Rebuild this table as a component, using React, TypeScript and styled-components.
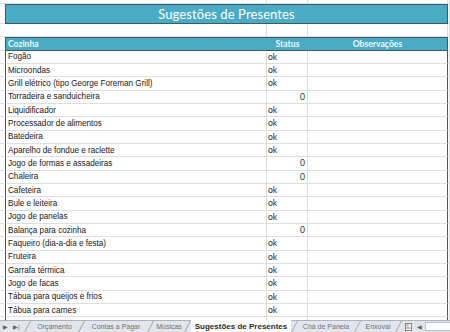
import React from 'react';
import styled, { createGlobalStyle } from 'styled-components';

const GlobalStyle = createGlobalStyle`
  html, body { margin: 0; padding: 0; width: 450px; height: 332px; overflow: hidden; background: #ffffff; }
  #root { width: 450px; height: 332px; }
`;

const ROW = 'calc(40px / 3)';
const GRID = '#dcdedf';
const EDGE = '#3b5b66';
const TEAL = '#4aabc5';
const COLS = '5px 262px 41px 140px 1fr';

const Window = styled.div`
  display: flex;
  flex-direction: column;
  width: 450px;
  height: 332px;
  overflow: hidden;
  font-family: "Liberation Sans", Arial, sans-serif;
`;

const Sheet = styled.div`
  flex: 1;
  min-height: 0;
  overflow: hidden;
  display: flex;
  flex-direction: column;
`;

const Row = styled.div<{ $h?: string }>`
  display: grid;
  grid-template-columns: ${COLS};
  height: ${(p) => p.$h ?? ROW};
  flex-shrink: 0;
`;

const Cell = styled.div<{ $edgeL?: boolean; $edgeR?: boolean }>`
  box-sizing: border-box;
  border-right: 1px solid ${(p) => (p.$edgeR ? EDGE : GRID)};
  border-bottom: 1px solid ${GRID};
  ${(p) => (p.$edgeL ? `border-left: 1px solid ${EDGE};` : '')}
  overflow: hidden;
  white-space: nowrap;
`;

const Margin = styled(Cell)`
  border-right: none;
`;

const Title = styled.div`
  grid-column: 2 / 5;
  box-sizing: border-box;
  border: 1px solid ${EDGE};
  background: ${TEAL};
  color: #ffffff;
  font-family: Lato, "Open Sans", sans-serif;
  font-size: 13px;
  display: flex;
  align-items: center;
  justify-content: center;
  letter-spacing: 0.1px;
`;

const HeadCell = styled.div<{ $align?: string; $edgeL?: boolean; $edgeR?: boolean }>`
  box-sizing: border-box;
  background: ${TEAL};
  border-top: 1px solid ${EDGE};
  border-bottom: 1px solid ${EDGE};
  ${(p) => (p.$edgeL ? `border-left: 1px solid ${EDGE};` : '')}
  ${(p) => (p.$edgeR ? `border-right: 1px solid ${EDGE};` : '')}
  color: #eef8fb;
  font-family: Lato, "Open Sans", sans-serif;
  font-weight: 700;
  font-size: 8.6px;
  display: flex;
  align-items: center;
  justify-content: ${(p) => p.$align ?? 'flex-start'};
  padding-left: ${(p) => (p.$align === 'center' ? '0' : '2px')};
  white-space: nowrap;
`;

const ItemCell = styled(Cell)`
  font-size: 8.15px;
  color: #161616;
  padding-left: 2px;
  display: flex;
  align-items: center;
`;

const StatusCell = styled(Cell)<{ $num?: boolean }>`
  font-family: Lato, "Open Sans", sans-serif;
  font-size: 8.6px;
  color: #2e2e2e;
  display: flex;
  align-items: center;
  justify-content: ${(p) => (p.$num ? 'flex-end' : 'flex-start')};
  padding: 0 2px 0 1px;
`;

const TabBar = styled.div`
  height: 12px;
  flex-shrink: 0;
  display: flex;
  align-items: stretch;
  background: #e2e6ec;
  border-top: 1px solid #aab3be;
  box-sizing: border-box;
  font-family: "Liberation Sans", Arial, sans-serif;
`;

const Nav = styled.div`
  width: 24px;
  display: flex;
  align-items: center;
  gap: 5px;
  padding-left: 3px;
  color: #5a6470;
  font-size: 6px;
  box-sizing: border-box;
`;

const Tab = styled.div<{ $w: number; $active?: boolean }>`
  width: ${(p) => p.$w}px;
  flex-shrink: 0;
  display: flex;
  align-items: center;
  justify-content: center;
  white-space: nowrap;
  font-size: ${(p) => (p.$active ? '8px' : '7px')};
  font-weight: ${(p) => (p.$active ? 700 : 400)};
  color: ${(p) => (p.$active ? '#2b2b2b' : '#6a7480')};
  background: ${(p) => (p.$active ? '#ffffff' : 'transparent')};
  margin-top: ${(p) => (p.$active ? '-1px' : '0')};
`;

const Slash = styled.svg`
  width: 7px;
  height: 11px;
  flex-shrink: 0;
  display: block;
`;

const Tail = styled.div`
  display: flex;
  align-items: center;
  gap: 5px;
  padding-left: 3px;
  color: #5a6470;
  font-size: 6px;
`;

const Scroll = styled.div`
  flex: 1;
  margin: 1px 0 1px 3px;
  background: #fbfcfd;
  border: 1px solid #b7c0cb;
  border-right: none;
`;

type Item = [string, string];

const items: Item[] = [
  ['Fogão', 'ok'],
  ['Microondas', 'ok'],
  ['Grill elétrico (tipo George Foreman Grill)', 'ok'],
  ['Torradeira e sanduicheira', '0'],
  ['Liquidificador', 'ok'],
  ['Processador de alimentos', 'ok'],
  ['Batedeira', 'ok'],
  ['Aparelho de fondue e raclette', 'ok'],
  ['Jogo de formas e assadeiras', '0'],
  ['Chaleira', '0'],
  ['Cafeteira', 'ok'],
  ['Bule e leiteira', 'ok'],
  ['Jogo de panelas', 'ok'],
  ['Balança para cozinha', '0'],
  ['Faqueiro (dia-a-dia e festa)', 'ok'],
  ['Fruteira', 'ok'],
  ['Garrafa térmica', 'ok'],
  ['Jogo de facas', 'ok'],
  ['Tábua para queijos e frios', 'ok'],
  ['Tábua para carnes', 'ok'],
  ['', ''],
  ['', ''],
];

const tabs: { label: string; w: number; active?: boolean }[] = [
  { label: 'Orçamento', w: 47 },
  { label: 'Contas a Pagar', w: 62 },
  { label: 'Músicas', w: 30 },
  { label: 'Sugestões de Presentes', w: 100, active: true },
  { label: 'Chá de Panela', w: 56 },
  { label: 'Enxoval', w: 34 },
];

const Sep = () => (
  <Slash viewBox="0 0 7 11">
    <line x1="0.5" y1="11" x2="6.5" y2="0" stroke="#9aa4b0" strokeWidth="1" />
  </Slash>
);

const SheetIcon = () => (
  <svg width="7" height="8" viewBox="0 0 7 8">
    <rect x="0.5" y="0.5" width="6" height="7" fill="#f4f6f8" stroke="#7d8894" />
    <rect x="1.5" y="1.5" width="2" height="2" fill="#e0a43a" />
    <line x1="1.5" y1="5" x2="5.5" y2="5" stroke="#7d8894" />
  </svg>
);

export default function App() {
  return (
    <Window>
      <GlobalStyle />
      <Sheet>
        <Row $h="4px">
          <Margin />
          <Cell />
          <Cell />
          <Cell />
          <Cell />
        </Row>
        <Row $h="20px">
          <Margin />
          <Title>Sugestões de Presentes</Title>
          <Cell />
        </Row>
        <Row>
          <Margin />
          <Cell />
          <Cell />
          <Cell />
          <Cell />
        </Row>
        <Row>
          <Margin />
          <HeadCell $edgeL>Cozinha</HeadCell>
          <HeadCell $align="center">Status</HeadCell>
          <HeadCell $align="center" $edgeR>Observações</HeadCell>
          <Cell />
        </Row>
        {items.map(([name, status], i) => (
          <Row key={i}>
            <Margin />
            <ItemCell $edgeL>{name}</ItemCell>
            <StatusCell $num={status === '0'}>{status}</StatusCell>
            <Cell $edgeR />
            <Cell />
          </Row>
        ))}
      </Sheet>
      <TabBar>
        <Nav>
          <span>▶</span>
          <span>▶|</span>
        </Nav>
        {tabs.map((t) => (
          <React.Fragment key={t.label}>
            <Sep />
            <Tab $w={t.w} $active={t.active}>{t.label}</Tab>
          </React.Fragment>
        ))}
        <Sep />
        <Tail>
          <SheetIcon />
          <span>◀</span>
        </Tail>
        <Scroll />
      </TabBar>
    </Window>
  );
}
